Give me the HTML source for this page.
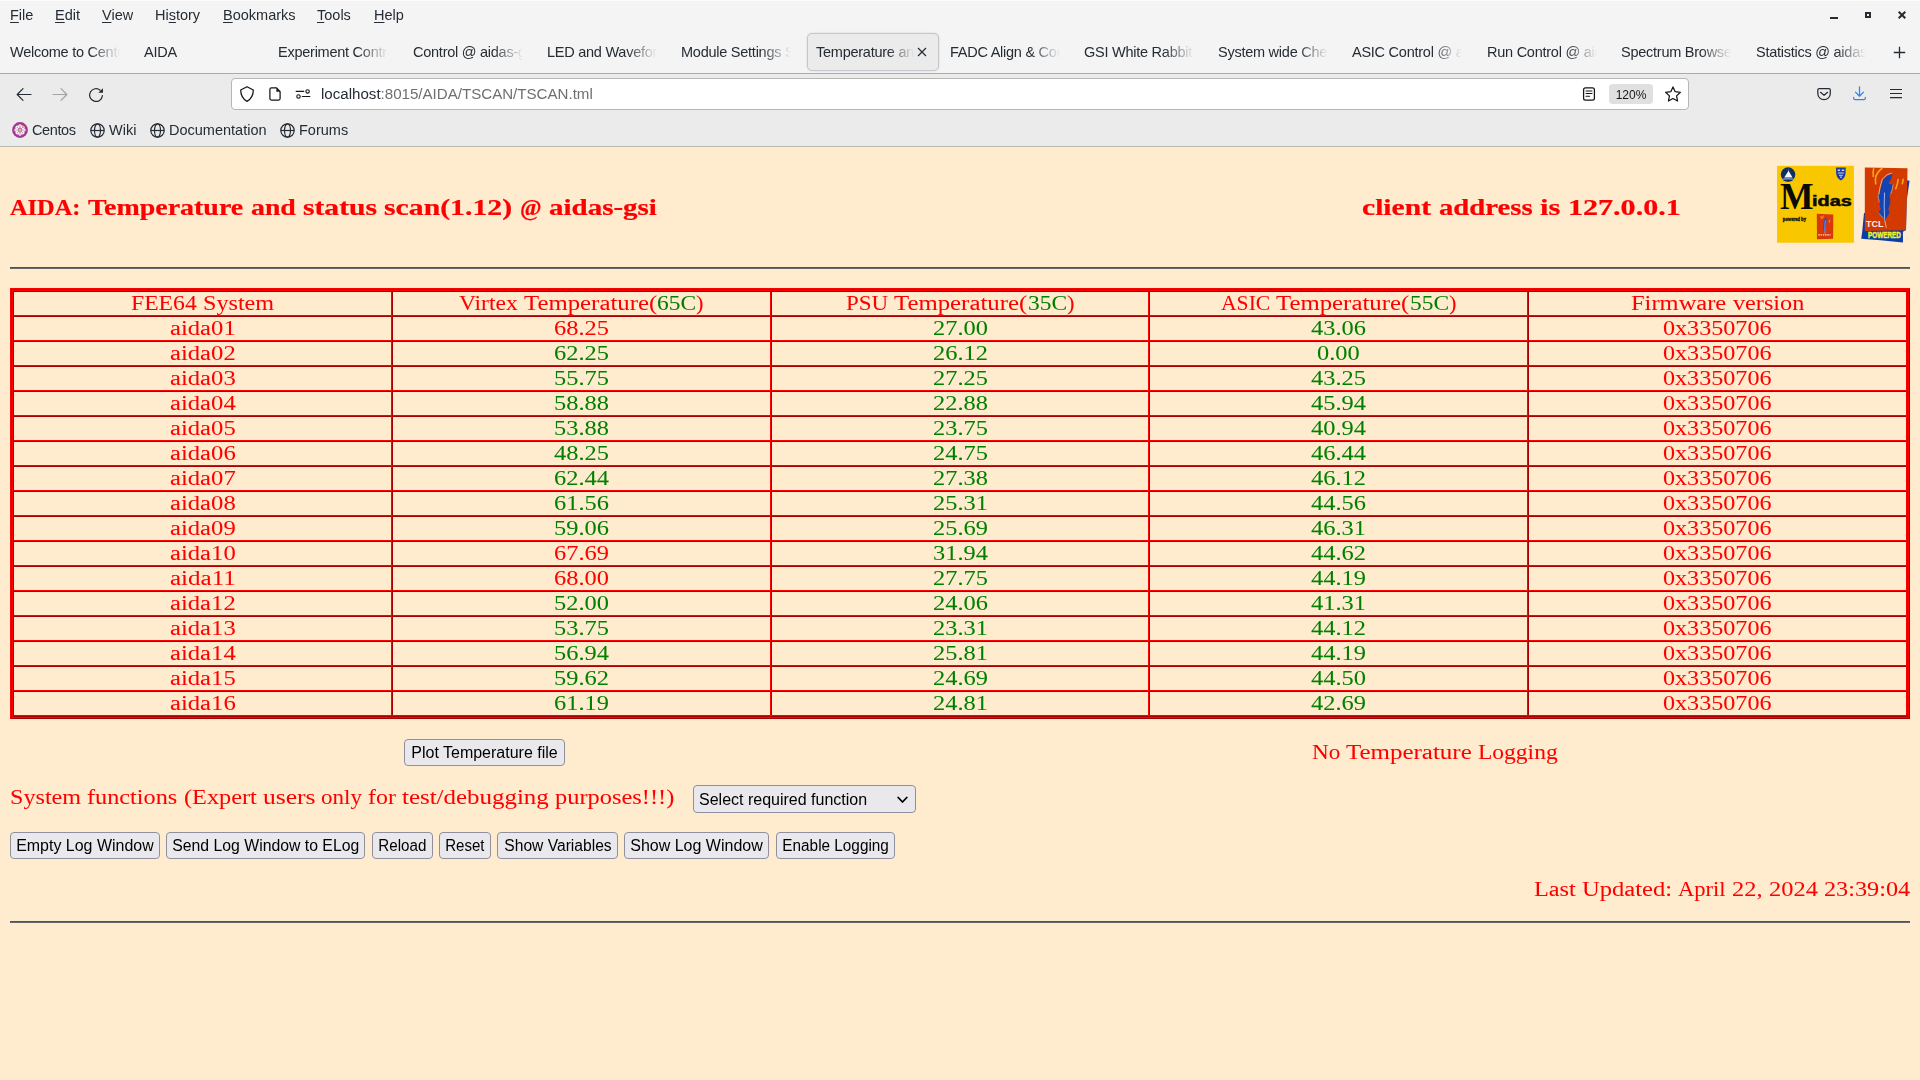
<!DOCTYPE html>
<html><head><meta charset="utf-8"><title>Temperature and status scan</title>
<style>
*{box-sizing:border-box;margin:0;padding:0}
html,body{width:1920px;height:1080px;overflow:hidden;background:#ffebcd;font-family:"Liberation Sans", sans-serif;}
#chrome{position:absolute;left:0;top:0;width:1920px;height:147px;background:#ebebeb;font-family:"Liberation Sans", sans-serif;color:#252c33;font-size:14.5px}
#chrome .top{position:absolute;left:0;top:0;width:1920px;height:73px;background:#f4f4f4}
#chrome .topline{position:absolute;left:0;top:0;width:1920px;height:1px;background:#fbfbfb}
#chrome .sep1{position:absolute;left:0;top:73px;width:1920px;height:1px;background:#ababab}
#chrome .sep2{position:absolute;left:0;top:146px;width:1920px;height:1px;background:#b9b9b5}
.mi{position:absolute;top:5px;height:20px;line-height:20px;white-space:pre}
.mi u{text-decoration:underline;text-underline-offset:1.5px;text-decoration-thickness:1px}
.tab{position:absolute;top:42px;height:20px;line-height:20px;width:113px;white-space:pre;overflow:hidden;letter-spacing:-0.25px;
  -webkit-mask-image:linear-gradient(to right,#000 0,#000 80px,transparent 110px);mask-image:linear-gradient(to right,#000 0,#000 80px,transparent 110px)}
.tab.full{-webkit-mask-image:none;mask-image:none}
#acttab{position:absolute;left:807px;top:33px;width:132px;height:38px;background:#ebebeb;border:1px solid #c6c6cc;border-radius:5px;box-shadow:0 0 2px rgba(0,0,0,.15)}
.tab.act{width:100px;-webkit-mask-image:linear-gradient(to right,#000 0,#000 72px,transparent 98px);mask-image:linear-gradient(to right,#000 0,#000 72px,transparent 98px)}
#urlbar{position:absolute;left:231px;top:78px;width:1458px;height:32px;background:#fff;border:1px solid #b6b6b2;border-radius:4px}
#url{position:absolute;left:321px;top:84px;height:20px;line-height:20px;font-size:15.1px;color:#6f6f6f;white-space:pre}
#url b{font-weight:400;color:#252c33}
#zoom{position:absolute;left:1609px;top:84px;width:44px;height:20px;background:#e0e0e0;border-radius:3px;text-align:center;line-height:22.5px;font-size:12px;color:#15141a}
.bm{position:absolute;top:120px;height:20px;line-height:20px;white-space:pre}
svg{position:absolute;overflow:visible}
#page{position:absolute;left:0;top:147px;width:1920px;height:933px;background:#ffebcd;overflow:hidden}
#page>*{position:absolute}
/* coordinates inside #page are absolute screen coords minus 147: we shift by using a wrapper */
#pg{position:absolute;left:0;top:-147px;width:1920px;height:1080px}
#pg>*{position:absolute}
.hr{left:10px;width:1900px;height:2px;background:#666;border-top:1px solid #4f5155;border-bottom:1px solid #66686e}
.ser{font-family:"Liberation Serif", serif;white-space:pre;color:#ff0000}
.tb{left:10px;top:288px;width:1900px;height:431px;
 box-shadow:inset 1px 1px 0 0 #ff0000, inset -1px -1px 0 0 #aa0000, inset 2px 2px 0 0 #aa0000, inset -2px -2px 0 0 #ff0000, inset 3px 3px 0 0 #ff0000, inset -3px -3px 0 0 #aa0000, inset 4px 4px 0 0 #aa0000, inset -4px -4px 0 0 #ff0000}
.hl{left:14px;width:1892px;height:2px;border-top:1px solid #ff0000;border-bottom:1px solid #aa0000}
.vl{top:292px;width:2px;height:423px;border-left:1px solid #ff0000;border-right:1px solid #aa0000}
.c{height:23px;text-align:center;font-family:"Liberation Serif", serif;white-space:pre;overflow:visible}
.c.r{color:#ff0000}.c.g{color:#008000}
.c i{font-style:normal;color:#008000}
.btn{height:27px;background:#e9e9ed;border:1px solid #8f8f9d;border-radius:4px;font-family:"Liberation Sans", sans-serif;font-size:16px;color:#000;text-align:center;line-height:26px;white-space:pre}
.sel{background:#e9e9ed;border:1px solid #8f8f9d;border-radius:4px;font-family:"Liberation Sans", sans-serif;font-size:16px;color:#000;line-height:27px;white-space:pre;padding-left:5px}
.sel svg{position:absolute}
.ser i{font-style:normal}

.btn span,.sel span{display:inline-block;transform-origin:50% 50%}
.mi,.bm,#url,#zoom,.btn span,.sel span,.tab.full{-webkit-mask-image:linear-gradient(#000,#000);mask-image:linear-gradient(#000,#000)}
.ser{-webkit-text-stroke:0.04px currentColor}
.ser.ttl,.ser.cli{-webkit-text-stroke:0.29px currentColor}

</style></head>
<body>
<div id="chrome">
<div class="top"></div><div class="topline"></div>
<div class="sep1"></div>
<!-- menu bar -->
<div class="mi" style="left:10px"><u>F</u>ile</div>
<div class="mi" style="left:55px"><u>E</u>dit</div>
<div class="mi" style="left:102px"><u>V</u>iew</div>
<div class="mi" style="left:155px">Hi<u>s</u>tory</div>
<div class="mi" style="left:223px"><u>B</u>ookmarks</div>
<div class="mi" style="left:317px"><u>T</u>ools</div>
<div class="mi" style="left:374px"><u>H</u>elp</div>
<!-- window controls -->
<svg style="left:1824px;top:6px" width="90" height="20" viewBox="1824 6 90 20">
<rect x="1830" y="17" width="8" height="2" fill="#252c33"/>
<rect x="1866" y="13" width="4" height="4" fill="none" stroke="#252c33" stroke-width="2"/>
<path d="M1898.7 11.7 L1905.3 18.3 M1905.3 11.7 L1898.7 18.3" stroke="#252c33" stroke-width="2" fill="none"/>
</svg>
<!-- tabs -->
<div id="acttab"></div>
<div class="tab" style="left:10px">Welcome to CentOS</div>
<div class="tab full" style="left:144px">AIDA</div>
<div class="tab" style="left:278px">Experiment Control</div>
<div class="tab" style="left:413px">Control @ aidas-gsi</div>
<div class="tab" style="left:547px">LED and Waveform</div>
<div class="tab" style="left:681px">Module Settings Se</div>
<div class="tab act" style="left:816px">Temperature and</div>
<div class="tab" style="left:950px">FADC Align &amp; Control</div>
<div class="tab" style="left:1084px">GSI White Rabbit</div>
<div class="tab" style="left:1218px">System wide Checks</div>
<div class="tab" style="left:1352px">ASIC Control @ aidas</div>
<div class="tab" style="left:1487px">Run Control @ aidas</div>
<div class="tab" style="left:1621px">Spectrum Browser</div>
<div class="tab" style="left:1756px">Statistics @ aidas-gsi</div>
<svg style="left:917px;top:47px" width="10" height="10" viewBox="0 0 10 10"><path d="M1 1 L9 9 M9 1 L1 9" stroke="#252c33" stroke-width="1.2" fill="none"/></svg>
<svg style="left:1893px;top:46px" width="13" height="13" viewBox="0 0 13 13"><path d="M6.5 0.8 V12.2 M0.8 6.5 H12.2" stroke="#252c33" stroke-width="1.3" fill="none"/></svg>
<!-- nav bar -->
<svg style="left:16px;top:87px" width="16" height="16" viewBox="0 0 16 16"><path d="M15 7.5 H1.4 M7 1.7 L1.2 7.5 L7 13.3" stroke="#252c33" stroke-width="1.2" fill="none" stroke-linecap="round" stroke-linejoin="round"/></svg>
<svg style="left:52px;top:87px" width="16" height="16" viewBox="0 0 16 16"><path d="M1 7.5 H14.6 M9 1.7 L14.8 7.5 L9 13.3" stroke="#a2a2a4" stroke-width="1.2" fill="none" stroke-linecap="round" stroke-linejoin="round"/></svg>
<svg style="left:88px;top:87px" width="16" height="16" viewBox="0 0 16 16"><path d="M14.4 8.7 A6.4 6.4 0 1 1 12.2 3.2" stroke="#252c33" stroke-width="1.25" fill="none" stroke-linecap="round"/><path d="M15 1.2 V5.8 H10.3 Z" fill="#252c33"/></svg>
<div id="urlbar"></div>
<svg style="left:239px;top:86px" width="16" height="16" viewBox="0 0 16 16"><path d="M8 0.7 L14.3 4 C14.3 9 12.2 13 8 15.4 C3.8 13 1.7 9 1.7 4 Z" stroke="#15141a" stroke-width="1.25" fill="none" stroke-linejoin="round"/></svg>
<svg style="left:267px;top:86px" width="16" height="16" viewBox="0 0 16 16"><path d="M2.9 3.4 Q2.9 1.9 4.4 1.9 H9.6 L13.1 5.6 V12.5 Q13.1 14 11.6 14 H4.4 Q2.9 14 2.9 12.5 Z" stroke="#15141a" stroke-width="1.25" fill="none" stroke-linejoin="round"/><path d="M9.4 1.9 L13.1 5.8 H9.4 Z" fill="#15141a"/></svg>
<svg style="left:295px;top:88px" width="16" height="12" viewBox="0 0 16 12"><path d="M1.2 3.4 H8.7 M7.3 8.5 H14.8" stroke="#15141a" stroke-width="1.2" fill="none" stroke-linecap="round"/><circle cx="12.6" cy="3.4" r="1.7" stroke="#15141a" stroke-width="1.1" fill="none"/><circle cx="3.5" cy="8.5" r="1.7" stroke="#15141a" stroke-width="1.1" fill="none"/></svg>
<div id="url"><b>localhost</b>:8015/AIDA/TSCAN/TSCAN.tml</div>
<svg style="left:1582px;top:87px" width="14" height="14" viewBox="0 0 14 14"><rect x="1.6" y="0.8" width="10.8" height="12.4" rx="1.9" stroke="#15141a" stroke-width="1.25" fill="none"/><path d="M4 3.9 H10 M4 6.5 H10 M4 9.3 H7.6" stroke="#15141a" stroke-width="1.05" fill="none" stroke-linecap="round"/></svg>
<div id="zoom">120%</div>
<svg style="left:1665px;top:86px" width="16" height="16" viewBox="0 0 16 16"><path d="M8.00 0.90 L10.20 5.67 L15.42 6.29 L11.57 9.86 L12.58 15.01 L8.00 12.45 L3.42 15.01 L4.43 9.86 L0.58 6.29 L5.80 5.67 Z" stroke="#15141a" stroke-width="1.25" fill="none" stroke-linejoin="round"/></svg>
<svg style="left:1816px;top:88px" width="16" height="14" viewBox="0 0 16 14"><path d="M3.2 0.7 H12.9 Q14.3 0.7 14.3 2.1 V5.4 A6.25 6.25 0 0 1 1.8 5.4 V2.1 Q1.8 0.7 3.2 0.7 Z" stroke="#252c33" stroke-width="1.25" fill="none"/><path d="M4.5 4.3 L8.05 7.3 L11.6 4.3" stroke="#252c33" stroke-width="1.25" fill="none" stroke-linecap="round" stroke-linejoin="round"/></svg>
<svg style="left:1852px;top:86px" width="15" height="16" viewBox="0 0 15 16"><path d="M7.5 0.8 V10 M3.5 6.1 L7.5 10.2 L11.5 6.1" stroke="#3584e4" stroke-width="1.25" fill="none" stroke-linecap="round" stroke-linejoin="round"/><path d="M1.7 11.4 V12.2 Q1.7 13.7 3.2 13.7 H11.8 Q13.3 13.7 13.3 12.2 V11.4" stroke="#3584e4" stroke-width="1.25" fill="none" stroke-linecap="round"/></svg>
<svg style="left:1890px;top:88px" width="12" height="12" viewBox="0 0 12 12"><path d="M0 1.5 H12 M0 5.5 H12 M0 9.6 H12" stroke="#252c33" stroke-width="1.2" fill="none"/></svg>
<!-- bookmarks -->
<svg style="left:12px;top:122px" width="16" height="16" viewBox="0 0 16 16"><circle cx="8" cy="8" r="7.9" fill="#a0398f"/><circle cx="11.90" cy="8.00" r="1.75" fill="#fff"/><circle cx="11.90" cy="8.00" r="0.6" fill="#9c3a8c"/><circle cx="10.76" cy="10.76" r="1.75" fill="#fff"/><circle cx="10.76" cy="10.76" r="0.6" fill="#9c3a8c"/><circle cx="8.00" cy="11.90" r="1.75" fill="#fff"/><circle cx="8.00" cy="11.90" r="0.6" fill="#9c3a8c"/><circle cx="5.24" cy="10.76" r="1.75" fill="#fff"/><circle cx="5.24" cy="10.76" r="0.6" fill="#9c3a8c"/><circle cx="4.10" cy="8.00" r="1.75" fill="#fff"/><circle cx="4.10" cy="8.00" r="0.6" fill="#9c3a8c"/><circle cx="5.24" cy="5.24" r="1.75" fill="#fff"/><circle cx="5.24" cy="5.24" r="0.6" fill="#9c3a8c"/><circle cx="8.00" cy="4.10" r="1.75" fill="#fff"/><circle cx="8.00" cy="4.10" r="0.6" fill="#9c3a8c"/><circle cx="10.76" cy="5.24" r="1.75" fill="#fff"/><circle cx="10.76" cy="5.24" r="0.6" fill="#9c3a8c"/><circle cx="8" cy="8" r="1.5" fill="#fff"/><circle cx="8" cy="8" r="1.0" fill="#f0a020"/><circle cx="11.2" cy="4.8" r="0.9" fill="#f0a020"/></svg>
<div class="bm" style="left:32px;letter-spacing:-0.4px">Centos</div>
<svg class="gl" style="left:90px;top:123px" width="15" height="15" viewBox="0 0 15 15"><g fill="none" stroke="#252c33" stroke-width="1.2"><circle cx="7.5" cy="7.5" r="6.7"/><ellipse cx="7.5" cy="7.5" rx="3" ry="6.7"/><path d="M0.8 7.5 H14.2"/></g></svg>
<div class="bm" style="left:109px">Wiki</div>
<svg class="gl" style="left:150px;top:123px" width="15" height="15" viewBox="0 0 15 15"><g fill="none" stroke="#252c33" stroke-width="1.2"><circle cx="7.5" cy="7.5" r="6.7"/><ellipse cx="7.5" cy="7.5" rx="3" ry="6.7"/><path d="M0.8 7.5 H14.2"/></g></svg>
<div class="bm" style="left:169px">Documentation</div>
<svg class="gl" style="left:280px;top:123px" width="15" height="15" viewBox="0 0 15 15"><g fill="none" stroke="#252c33" stroke-width="1.2"><circle cx="7.5" cy="7.5" r="6.7"/><ellipse cx="7.5" cy="7.5" rx="3" ry="6.7"/><path d="M0.8 7.5 H14.2"/></g></svg>
<div class="bm" style="left:299px">Forums</div>
<div class="sep2"></div>
</div>

<div id="page"><div id="pg">
<div class="ser ttl" style="left:10.00px;top:190px;font-size:28.3px;line-height:31px;height:31px;color:#ff0000;transform:scale(0.8603,0.8495);transform-origin:0 25px;font-weight:700;">AIDA:</div>
<div class="ser ttl" style="left:87.85px;top:190px;font-size:28.3px;line-height:31px;height:31px;color:#ff0000;transform:scale(0.9874,0.8495);transform-origin:0 25px;font-weight:700;">Temperature</div>
<div class="ser ttl" style="left:250.58px;top:190px;font-size:28.3px;line-height:31px;height:31px;color:#ff0000;transform:scale(0.9819,0.8495);transform-origin:0 25px;font-weight:700;">and</div>
<div class="ser ttl" style="left:302.91px;top:190px;font-size:28.3px;line-height:31px;height:31px;color:#ff0000;transform:scale(1.0454,0.8495);transform-origin:0 25px;font-weight:700;">status</div>
<div class="ser ttl" style="left:384.40px;top:190px;font-size:28.3px;line-height:31px;height:31px;color:#ff0000;transform:scale(1.0511,0.8495);transform-origin:0 25px;font-weight:700;">scan(1.12)</div>
<div class="ser ttl" style="left:519.98px;top:190px;font-size:28.3px;line-height:31px;height:31px;color:#ff0000;transform:scale(0.8205,0.8495);transform-origin:0 25px;font-weight:700;">@</div>
<div class="ser ttl" style="left:549.11px;top:190px;font-size:28.3px;line-height:31px;height:31px;color:#ff0000;transform:scale(1.024,0.8495);transform-origin:0 25px;font-weight:700;">aidas-gsi</div>
<div class="ser cli" style="left:1362.00px;top:190px;font-size:28.3px;line-height:31px;height:31px;color:#ff0000;transform:scale(1.0451,0.8495);transform-origin:0 25px;font-weight:700;">client</div>
<div class="ser cli" style="left:1438.51px;top:190px;font-size:28.3px;line-height:31px;height:31px;color:#ff0000;transform:scale(1.0149,0.8495);transform-origin:0 25px;font-weight:700;">address</div>
<div class="ser cli" style="left:1539.67px;top:190px;font-size:28.3px;line-height:31px;height:31px;color:#ff0000;transform:scale(1.0789,0.8495);transform-origin:0 25px;font-weight:700;">is</div>
<div class="ser cli" style="left:1567.56px;top:190px;font-size:28.3px;line-height:31px;height:31px;color:#ff0000;transform:scale(1.0623,0.8495);transform-origin:0 25px;font-weight:700;">127.0.0.1</div>
<svg style="left:1772px;top:160px" width="88" height="88" viewBox="0 0 1080 1080">
<rect x="62" y="72" width="943" height="943" fill="#f8c700"/>
<circle cx="197" cy="178" r="89" fill="#0e2f66"/>
<ellipse cx="197" cy="236" rx="70" ry="16" fill="#9fb6d6" opacity=".75"/>
<ellipse cx="197" cy="250" rx="58" ry="12" fill="#0e2f66"/>
<path d="M203 132 L252 214 L150 214 Z" fill="#f4f8fc"/>
<path d="M203 105 L209 135 L197 135 Z" fill="#8fa8cc" opacity=".7"/>
<path d="M785 92 H905 L902 170 Q895 225 845 252 Q795 225 788 170 Z" fill="#1c3aa6"/>
<path d="M806 118 h30 v18 h-30 z M856 118 h30 v18 h-30 z M810 152 h72 v14 h-72 z M822 180 h48 v12 h-48 z M836 204 h22 v14 h-22 z" fill="#e8ecf8" opacity=".85"/>
<text x="98" y="600" font-family="'Liberation Serif',serif" font-weight="700" font-size="466" fill="#0a0a06" textLength="412" lengthAdjust="spacingAndGlyphs">M</text>
<text x="492" y="561" font-family="'Liberation Sans',sans-serif" font-weight="700" font-size="178" fill="#0a0a06" textLength="486" lengthAdjust="spacingAndGlyphs" stroke="#0a0a06" stroke-width="6">idas</text>
<text x="133" y="754" font-family="'Liberation Serif',serif" font-weight="700" font-size="62" fill="#1a1600" textLength="285" lengthAdjust="spacingAndGlyphs" stroke="#1a1600" stroke-width="4">powered by</text>
<path d="M550 660 L752 668 L750 968 L552 972 Z" fill="#d8380c"/>
<path d="M668 706 Q636 720 630 790 Q626 850 640 890 Q662 860 664 800 Q672 750 668 706 Z" fill="#1c50c0"/>
<path d="M655 740 Q646 800 650 905" stroke="#e8ecf8" stroke-width="7" fill="none" opacity=".8"/>
<path d="M598 686 Q608 700 606 722 M630 682 Q622 700 624 716 M712 735 Q704 750 702 768" stroke="#f0a818" stroke-width="12" fill="none"/>
<path d="M568 920 h150" stroke="#f0d0b0" stroke-width="22" stroke-dasharray="18 10" fill="none" opacity=".85"/>
</svg>
<svg style="left:1856px;top:160px" width="60" height="88" viewBox="0 0 736 1080">
<path d="M632 248 L657 256 L622 500 L614 860 L576 880 L576 1014 L300 986 L64 968 L76 880 L98 650 L300 640 Z" fill="#0c3ca8"/>
<path d="M108 92 L632 100 L626 400 L612 862 L108 870 Z" fill="#d23a00"/>
<path d="M446 172 Q392 176 334 240 Q300 330 288 428 L268 428 Q276 480 288 520 Q292 570 302 600 L276 650 Q316 690 352 748 Q384 700 412 642 L396 600 Q424 548 422 482 L410 440 Q440 384 452 300 L398 290 Q440 236 446 172 Z" fill="#1444b4"/>
<path d="M440 160 Q380 165 322 235 Q292 330 278 425" stroke="#f0f0f8" stroke-width="9" fill="none" opacity=".85"/>
<path d="M350 400 Q340 560 352 740 L372 832" stroke="#e8e8f4" stroke-width="9" fill="none" opacity=".9"/>
<path d="M456 300 Q452 350 426 420 M270 430 Q276 480 286 520 M278 652 Q310 680 340 720" stroke="#f0f0f8" stroke-width="8" fill="none" opacity=".7"/>
<path d="M216 108 Q206 150 212 200 M318 104 Q256 150 240 214 Q236 250 242 292 M516 240 Q512 300 488 352 M578 238 Q576 262 568 290" stroke="#f8a414" stroke-width="20" fill="none" stroke-linecap="round"/>
<text x="122" y="826" font-family="'Liberation Sans',sans-serif" font-weight="700" font-size="102" fill="#f8f0ec" textLength="214" lengthAdjust="spacingAndGlyphs">TCL</text>
<text x="148" y="958" font-family="'Liberation Sans',sans-serif" font-weight="700" font-size="104" fill="#f0f028" textLength="402" lengthAdjust="spacingAndGlyphs" stroke="#f0f028" stroke-width="6">POWERED</text>
</svg>

<div class="hr" style="top:267px"></div>
<div class="tb"></div>
<div class="hl" style="top:315px"></div>
<div class="hl" style="top:340px"></div>
<div class="hl" style="top:365px"></div>
<div class="hl" style="top:390px"></div>
<div class="hl" style="top:415px"></div>
<div class="hl" style="top:440px"></div>
<div class="hl" style="top:465px"></div>
<div class="hl" style="top:490px"></div>
<div class="hl" style="top:515px"></div>
<div class="hl" style="top:540px"></div>
<div class="hl" style="top:565px"></div>
<div class="hl" style="top:590px"></div>
<div class="hl" style="top:615px"></div>
<div class="hl" style="top:640px"></div>
<div class="hl" style="top:665px"></div>
<div class="hl" style="top:690px"></div>
<div class="vl" style="left:391px"></div>
<div class="vl" style="left:770px"></div>
<div class="vl" style="left:1148px"></div>
<div class="vl" style="left:1527px"></div>
<div class="ser h0" style="left:130.99px;top:288px;font-size:24.31px;line-height:27px;height:27px;color:#ff0000;transform:scale(0.9741,0.879);transform-origin:0 22px;">FEE64</div>
<div class="ser h0" style="left:202.88px;top:288px;font-size:24.31px;line-height:27px;height:27px;color:#ff0000;transform:scale(0.9937,0.879);transform-origin:0 22px;">System</div>
<div class="ser h1" style="left:459.13px;top:288px;font-size:24.31px;line-height:27px;height:27px;color:#ff0000;transform:scale(0.9688,0.879);transform-origin:0 22px;">Virtex</div>
<div class="ser h1" style="left:523.98px;top:288px;font-size:24.31px;line-height:27px;height:27px;color:#ff0000;transform:scale(1.0207,0.879);transform-origin:0 22px;">Temperature(</div>
<div class="ser h1" style="left:657.26px;top:288px;font-size:24.31px;line-height:27px;height:27px;color:#008000;transform:scale(0.9654,0.879);transform-origin:0 22px;">65C</div>
<div class="ser h1" style="left:696.38px;top:288px;font-size:24.31px;line-height:27px;height:27px;color:#ff0000;transform:scale(0.9252,0.879);transform-origin:0 22px;">)</div>
<div class="ser h2" style="left:845.88px;top:288px;font-size:24.31px;line-height:27px;height:27px;color:#ff0000;transform:scale(0.9474,0.879);transform-origin:0 22px;">PSU</div>
<div class="ser h2" style="left:894.23px;top:288px;font-size:24.31px;line-height:27px;height:27px;color:#ff0000;transform:scale(1.0207,0.879);transform-origin:0 22px;">Temperature(</div>
<div class="ser h2" style="left:1027.51px;top:288px;font-size:24.31px;line-height:27px;height:27px;color:#008000;transform:scale(0.9654,0.879);transform-origin:0 22px;">35C</div>
<div class="ser h2" style="left:1066.63px;top:288px;font-size:24.31px;line-height:27px;height:27px;color:#ff0000;transform:scale(0.9252,0.879);transform-origin:0 22px;">)</div>
<div class="ser h3" style="left:1220.86px;top:288px;font-size:24.31px;line-height:27px;height:27px;color:#ff0000;transform:scale(0.89,0.879);transform-origin:0 22px;">ASIC</div>
<div class="ser h3" style="left:1276.25px;top:288px;font-size:24.31px;line-height:27px;height:27px;color:#ff0000;transform:scale(1.0207,0.879);transform-origin:0 22px;">Temperature(</div>
<div class="ser h3" style="left:1409.53px;top:288px;font-size:24.31px;line-height:27px;height:27px;color:#008000;transform:scale(0.9654,0.879);transform-origin:0 22px;">55C</div>
<div class="ser h3" style="left:1448.65px;top:288px;font-size:24.31px;line-height:27px;height:27px;color:#ff0000;transform:scale(0.9252,0.879);transform-origin:0 22px;">)</div>
<div class="ser h4" style="left:1631.16px;top:288px;font-size:24.31px;line-height:27px;height:27px;color:#ff0000;transform:scale(1.008,0.879);transform-origin:0 22px;">Firmware</div>
<div class="ser h4" style="left:1732.53px;top:288px;font-size:24.31px;line-height:27px;height:27px;color:#ff0000;transform:scale(0.9964,0.879);transform-origin:0 22px;">version</div>
<div class="ser nm" style="left:169.62px;top:313px;font-size:24.31px;line-height:27px;height:27px;color:#ff0000;transform:scale(1.0148,0.879);transform-origin:0 22px;">aida01</div>
<div class="ser nu" style="left:554.02px;top:313px;font-size:24.31px;line-height:27px;height:27px;color:#ff0000;transform:scale(1.0049,0.879);transform-origin:0 22px;">68.25</div>
<div class="ser nu" style="left:932.52px;top:313px;font-size:24.31px;line-height:27px;height:27px;color:#008000;transform:scale(1.0049,0.879);transform-origin:0 22px;">27.00</div>
<div class="ser nu" style="left:1311.02px;top:313px;font-size:24.31px;line-height:27px;height:27px;color:#008000;transform:scale(1.0049,0.879);transform-origin:0 22px;">43.06</div>
<div class="ser fw" style="left:1663.22px;top:313px;font-size:24.31px;line-height:27px;height:27px;color:#ff0000;transform:scale(0.9923,0.879);transform-origin:0 22px;">0x3350706</div>
<div class="ser nm" style="left:169.62px;top:338px;font-size:24.31px;line-height:27px;height:27px;color:#ff0000;transform:scale(1.0148,0.879);transform-origin:0 22px;">aida02</div>
<div class="ser nu" style="left:554.02px;top:338px;font-size:24.31px;line-height:27px;height:27px;color:#008000;transform:scale(1.0049,0.879);transform-origin:0 22px;">62.25</div>
<div class="ser nu" style="left:932.52px;top:338px;font-size:24.31px;line-height:27px;height:27px;color:#008000;transform:scale(1.0049,0.879);transform-origin:0 22px;">26.12</div>
<div class="ser nu" style="left:1317.12px;top:338px;font-size:24.31px;line-height:27px;height:27px;color:#008000;transform:scale(1.0049,0.879);transform-origin:0 22px;">0.00</div>
<div class="ser fw" style="left:1663.22px;top:338px;font-size:24.31px;line-height:27px;height:27px;color:#ff0000;transform:scale(0.9923,0.879);transform-origin:0 22px;">0x3350706</div>
<div class="ser nm" style="left:169.62px;top:363px;font-size:24.31px;line-height:27px;height:27px;color:#ff0000;transform:scale(1.0148,0.879);transform-origin:0 22px;">aida03</div>
<div class="ser nu" style="left:554.02px;top:363px;font-size:24.31px;line-height:27px;height:27px;color:#008000;transform:scale(1.0049,0.879);transform-origin:0 22px;">55.75</div>
<div class="ser nu" style="left:932.52px;top:363px;font-size:24.31px;line-height:27px;height:27px;color:#008000;transform:scale(1.0049,0.879);transform-origin:0 22px;">27.25</div>
<div class="ser nu" style="left:1311.02px;top:363px;font-size:24.31px;line-height:27px;height:27px;color:#008000;transform:scale(1.0049,0.879);transform-origin:0 22px;">43.25</div>
<div class="ser fw" style="left:1663.22px;top:363px;font-size:24.31px;line-height:27px;height:27px;color:#ff0000;transform:scale(0.9923,0.879);transform-origin:0 22px;">0x3350706</div>
<div class="ser nm" style="left:169.62px;top:388px;font-size:24.31px;line-height:27px;height:27px;color:#ff0000;transform:scale(1.0148,0.879);transform-origin:0 22px;">aida04</div>
<div class="ser nu" style="left:554.02px;top:388px;font-size:24.31px;line-height:27px;height:27px;color:#008000;transform:scale(1.0049,0.879);transform-origin:0 22px;">58.88</div>
<div class="ser nu" style="left:932.52px;top:388px;font-size:24.31px;line-height:27px;height:27px;color:#008000;transform:scale(1.0049,0.879);transform-origin:0 22px;">22.88</div>
<div class="ser nu" style="left:1311.02px;top:388px;font-size:24.31px;line-height:27px;height:27px;color:#008000;transform:scale(1.0049,0.879);transform-origin:0 22px;">45.94</div>
<div class="ser fw" style="left:1663.22px;top:388px;font-size:24.31px;line-height:27px;height:27px;color:#ff0000;transform:scale(0.9923,0.879);transform-origin:0 22px;">0x3350706</div>
<div class="ser nm" style="left:169.62px;top:413px;font-size:24.31px;line-height:27px;height:27px;color:#ff0000;transform:scale(1.0148,0.879);transform-origin:0 22px;">aida05</div>
<div class="ser nu" style="left:554.02px;top:413px;font-size:24.31px;line-height:27px;height:27px;color:#008000;transform:scale(1.0049,0.879);transform-origin:0 22px;">53.88</div>
<div class="ser nu" style="left:932.52px;top:413px;font-size:24.31px;line-height:27px;height:27px;color:#008000;transform:scale(1.0049,0.879);transform-origin:0 22px;">23.75</div>
<div class="ser nu" style="left:1311.02px;top:413px;font-size:24.31px;line-height:27px;height:27px;color:#008000;transform:scale(1.0049,0.879);transform-origin:0 22px;">40.94</div>
<div class="ser fw" style="left:1663.22px;top:413px;font-size:24.31px;line-height:27px;height:27px;color:#ff0000;transform:scale(0.9923,0.879);transform-origin:0 22px;">0x3350706</div>
<div class="ser nm" style="left:169.62px;top:438px;font-size:24.31px;line-height:27px;height:27px;color:#ff0000;transform:scale(1.0148,0.879);transform-origin:0 22px;">aida06</div>
<div class="ser nu" style="left:554.02px;top:438px;font-size:24.31px;line-height:27px;height:27px;color:#008000;transform:scale(1.0049,0.879);transform-origin:0 22px;">48.25</div>
<div class="ser nu" style="left:932.52px;top:438px;font-size:24.31px;line-height:27px;height:27px;color:#008000;transform:scale(1.0049,0.879);transform-origin:0 22px;">24.75</div>
<div class="ser nu" style="left:1311.02px;top:438px;font-size:24.31px;line-height:27px;height:27px;color:#008000;transform:scale(1.0049,0.879);transform-origin:0 22px;">46.44</div>
<div class="ser fw" style="left:1663.22px;top:438px;font-size:24.31px;line-height:27px;height:27px;color:#ff0000;transform:scale(0.9923,0.879);transform-origin:0 22px;">0x3350706</div>
<div class="ser nm" style="left:169.62px;top:463px;font-size:24.31px;line-height:27px;height:27px;color:#ff0000;transform:scale(1.0148,0.879);transform-origin:0 22px;">aida07</div>
<div class="ser nu" style="left:554.02px;top:463px;font-size:24.31px;line-height:27px;height:27px;color:#008000;transform:scale(1.0049,0.879);transform-origin:0 22px;">62.44</div>
<div class="ser nu" style="left:932.52px;top:463px;font-size:24.31px;line-height:27px;height:27px;color:#008000;transform:scale(1.0049,0.879);transform-origin:0 22px;">27.38</div>
<div class="ser nu" style="left:1311.02px;top:463px;font-size:24.31px;line-height:27px;height:27px;color:#008000;transform:scale(1.0049,0.879);transform-origin:0 22px;">46.12</div>
<div class="ser fw" style="left:1663.22px;top:463px;font-size:24.31px;line-height:27px;height:27px;color:#ff0000;transform:scale(0.9923,0.879);transform-origin:0 22px;">0x3350706</div>
<div class="ser nm" style="left:169.62px;top:488px;font-size:24.31px;line-height:27px;height:27px;color:#ff0000;transform:scale(1.0148,0.879);transform-origin:0 22px;">aida08</div>
<div class="ser nu" style="left:554.02px;top:488px;font-size:24.31px;line-height:27px;height:27px;color:#008000;transform:scale(1.0049,0.879);transform-origin:0 22px;">61.56</div>
<div class="ser nu" style="left:932.52px;top:488px;font-size:24.31px;line-height:27px;height:27px;color:#008000;transform:scale(1.0049,0.879);transform-origin:0 22px;">25.31</div>
<div class="ser nu" style="left:1311.02px;top:488px;font-size:24.31px;line-height:27px;height:27px;color:#008000;transform:scale(1.0049,0.879);transform-origin:0 22px;">44.56</div>
<div class="ser fw" style="left:1663.22px;top:488px;font-size:24.31px;line-height:27px;height:27px;color:#ff0000;transform:scale(0.9923,0.879);transform-origin:0 22px;">0x3350706</div>
<div class="ser nm" style="left:169.62px;top:513px;font-size:24.31px;line-height:27px;height:27px;color:#ff0000;transform:scale(1.0148,0.879);transform-origin:0 22px;">aida09</div>
<div class="ser nu" style="left:554.02px;top:513px;font-size:24.31px;line-height:27px;height:27px;color:#008000;transform:scale(1.0049,0.879);transform-origin:0 22px;">59.06</div>
<div class="ser nu" style="left:932.52px;top:513px;font-size:24.31px;line-height:27px;height:27px;color:#008000;transform:scale(1.0049,0.879);transform-origin:0 22px;">25.69</div>
<div class="ser nu" style="left:1311.02px;top:513px;font-size:24.31px;line-height:27px;height:27px;color:#008000;transform:scale(1.0049,0.879);transform-origin:0 22px;">46.31</div>
<div class="ser fw" style="left:1663.22px;top:513px;font-size:24.31px;line-height:27px;height:27px;color:#ff0000;transform:scale(0.9923,0.879);transform-origin:0 22px;">0x3350706</div>
<div class="ser nm" style="left:169.62px;top:538px;font-size:24.31px;line-height:27px;height:27px;color:#ff0000;transform:scale(1.0148,0.879);transform-origin:0 22px;">aida10</div>
<div class="ser nu" style="left:554.02px;top:538px;font-size:24.31px;line-height:27px;height:27px;color:#ff0000;transform:scale(1.0049,0.879);transform-origin:0 22px;">67.69</div>
<div class="ser nu" style="left:932.52px;top:538px;font-size:24.31px;line-height:27px;height:27px;color:#008000;transform:scale(1.0049,0.879);transform-origin:0 22px;">31.94</div>
<div class="ser nu" style="left:1311.02px;top:538px;font-size:24.31px;line-height:27px;height:27px;color:#008000;transform:scale(1.0049,0.879);transform-origin:0 22px;">44.62</div>
<div class="ser fw" style="left:1663.22px;top:538px;font-size:24.31px;line-height:27px;height:27px;color:#ff0000;transform:scale(0.9923,0.879);transform-origin:0 22px;">0x3350706</div>
<div class="ser nm" style="left:169.62px;top:563px;font-size:24.31px;line-height:27px;height:27px;color:#ff0000;transform:scale(1.0291,0.879);transform-origin:0 22px;">aida11</div>
<div class="ser nu" style="left:554.02px;top:563px;font-size:24.31px;line-height:27px;height:27px;color:#ff0000;transform:scale(1.0049,0.879);transform-origin:0 22px;">68.00</div>
<div class="ser nu" style="left:932.52px;top:563px;font-size:24.31px;line-height:27px;height:27px;color:#008000;transform:scale(1.0049,0.879);transform-origin:0 22px;">27.75</div>
<div class="ser nu" style="left:1311.02px;top:563px;font-size:24.31px;line-height:27px;height:27px;color:#008000;transform:scale(1.0049,0.879);transform-origin:0 22px;">44.19</div>
<div class="ser fw" style="left:1663.22px;top:563px;font-size:24.31px;line-height:27px;height:27px;color:#ff0000;transform:scale(0.9923,0.879);transform-origin:0 22px;">0x3350706</div>
<div class="ser nm" style="left:169.62px;top:588px;font-size:24.31px;line-height:27px;height:27px;color:#ff0000;transform:scale(1.0148,0.879);transform-origin:0 22px;">aida12</div>
<div class="ser nu" style="left:554.02px;top:588px;font-size:24.31px;line-height:27px;height:27px;color:#008000;transform:scale(1.0049,0.879);transform-origin:0 22px;">52.00</div>
<div class="ser nu" style="left:932.52px;top:588px;font-size:24.31px;line-height:27px;height:27px;color:#008000;transform:scale(1.0049,0.879);transform-origin:0 22px;">24.06</div>
<div class="ser nu" style="left:1311.02px;top:588px;font-size:24.31px;line-height:27px;height:27px;color:#008000;transform:scale(1.0049,0.879);transform-origin:0 22px;">41.31</div>
<div class="ser fw" style="left:1663.22px;top:588px;font-size:24.31px;line-height:27px;height:27px;color:#ff0000;transform:scale(0.9923,0.879);transform-origin:0 22px;">0x3350706</div>
<div class="ser nm" style="left:169.62px;top:613px;font-size:24.31px;line-height:27px;height:27px;color:#ff0000;transform:scale(1.0148,0.879);transform-origin:0 22px;">aida13</div>
<div class="ser nu" style="left:554.02px;top:613px;font-size:24.31px;line-height:27px;height:27px;color:#008000;transform:scale(1.0049,0.879);transform-origin:0 22px;">53.75</div>
<div class="ser nu" style="left:932.52px;top:613px;font-size:24.31px;line-height:27px;height:27px;color:#008000;transform:scale(1.0049,0.879);transform-origin:0 22px;">23.31</div>
<div class="ser nu" style="left:1311.02px;top:613px;font-size:24.31px;line-height:27px;height:27px;color:#008000;transform:scale(1.0049,0.879);transform-origin:0 22px;">44.12</div>
<div class="ser fw" style="left:1663.22px;top:613px;font-size:24.31px;line-height:27px;height:27px;color:#ff0000;transform:scale(0.9923,0.879);transform-origin:0 22px;">0x3350706</div>
<div class="ser nm" style="left:169.62px;top:638px;font-size:24.31px;line-height:27px;height:27px;color:#ff0000;transform:scale(1.0148,0.879);transform-origin:0 22px;">aida14</div>
<div class="ser nu" style="left:554.02px;top:638px;font-size:24.31px;line-height:27px;height:27px;color:#008000;transform:scale(1.0049,0.879);transform-origin:0 22px;">56.94</div>
<div class="ser nu" style="left:932.52px;top:638px;font-size:24.31px;line-height:27px;height:27px;color:#008000;transform:scale(1.0049,0.879);transform-origin:0 22px;">25.81</div>
<div class="ser nu" style="left:1311.02px;top:638px;font-size:24.31px;line-height:27px;height:27px;color:#008000;transform:scale(1.0049,0.879);transform-origin:0 22px;">44.19</div>
<div class="ser fw" style="left:1663.22px;top:638px;font-size:24.31px;line-height:27px;height:27px;color:#ff0000;transform:scale(0.9923,0.879);transform-origin:0 22px;">0x3350706</div>
<div class="ser nm" style="left:169.62px;top:663px;font-size:24.31px;line-height:27px;height:27px;color:#ff0000;transform:scale(1.0148,0.879);transform-origin:0 22px;">aida15</div>
<div class="ser nu" style="left:554.02px;top:663px;font-size:24.31px;line-height:27px;height:27px;color:#008000;transform:scale(1.0049,0.879);transform-origin:0 22px;">59.62</div>
<div class="ser nu" style="left:932.52px;top:663px;font-size:24.31px;line-height:27px;height:27px;color:#008000;transform:scale(1.0049,0.879);transform-origin:0 22px;">24.69</div>
<div class="ser nu" style="left:1311.02px;top:663px;font-size:24.31px;line-height:27px;height:27px;color:#008000;transform:scale(1.0049,0.879);transform-origin:0 22px;">44.50</div>
<div class="ser fw" style="left:1663.22px;top:663px;font-size:24.31px;line-height:27px;height:27px;color:#ff0000;transform:scale(0.9923,0.879);transform-origin:0 22px;">0x3350706</div>
<div class="ser nm" style="left:169.62px;top:688px;font-size:24.31px;line-height:27px;height:27px;color:#ff0000;transform:scale(1.0148,0.879);transform-origin:0 22px;">aida16</div>
<div class="ser nu" style="left:554.02px;top:688px;font-size:24.31px;line-height:27px;height:27px;color:#008000;transform:scale(1.0049,0.879);transform-origin:0 22px;">61.19</div>
<div class="ser nu" style="left:932.52px;top:688px;font-size:24.31px;line-height:27px;height:27px;color:#008000;transform:scale(1.0049,0.879);transform-origin:0 22px;">24.81</div>
<div class="ser nu" style="left:1311.02px;top:688px;font-size:24.31px;line-height:27px;height:27px;color:#008000;transform:scale(1.0049,0.879);transform-origin:0 22px;">42.69</div>
<div class="ser fw" style="left:1663.22px;top:688px;font-size:24.31px;line-height:27px;height:27px;color:#ff0000;transform:scale(0.9923,0.879);transform-origin:0 22px;">0x3350706</div>
<div class="btn" style="left:404px;top:739px;width:161px"><span>Plot Temperature file</span></div>
<div class="ser notl" style="left:1311.98px;top:737px;font-size:24.31px;line-height:27px;height:27px;color:#ff0000;transform:scale(0.9545,0.879);transform-origin:0 22px;">No</div>
<div class="ser notl" style="left:1346.44px;top:737px;font-size:24.31px;line-height:27px;height:27px;color:#ff0000;transform:scale(1.027,0.879);transform-origin:0 22px;">Temperature</div>
<div class="ser notl" style="left:1478.33px;top:737px;font-size:24.31px;line-height:27px;height:27px;color:#ff0000;transform:scale(0.9673,0.879);transform-origin:0 22px;">Logging</div>
<div class="ser sysf" style="left:10.00px;top:782px;font-size:24.31px;line-height:27px;height:27px;color:#ff0000;transform:scale(0.9937,0.879);transform-origin:0 22px;">System</div>
<div class="ser sysf" style="left:87.24px;top:782px;font-size:24.31px;line-height:27px;height:27px;color:#ff0000;transform:scale(0.9972,0.879);transform-origin:0 22px;">functions</div>
<div class="ser sysf" style="left:183.57px;top:782px;font-size:24.31px;line-height:27px;height:27px;color:#ff0000;transform:scale(0.9998,0.879);transform-origin:0 22px;">(Expert</div>
<div class="ser sysf" style="left:262.55px;top:782px;font-size:24.31px;line-height:27px;height:27px;color:#ff0000;transform:scale(1.053,0.879);transform-origin:0 22px;">users</div>
<div class="ser sysf" style="left:321.27px;top:782px;font-size:24.31px;line-height:27px;height:27px;color:#ff0000;transform:scale(0.9466,0.879);transform-origin:0 22px;">only</div>
<div class="ser sysf" style="left:368.28px;top:782px;font-size:24.31px;line-height:27px;height:27px;color:#ff0000;transform:scale(0.9823,0.879);transform-origin:0 22px;">for</div>
<div class="ser sysf" style="left:402.23px;top:782px;font-size:24.31px;line-height:27px;height:27px;color:#ff0000;transform:scale(1.0256,0.879);transform-origin:0 22px;">test/debugging</div>
<div class="ser sysf" style="left:555.14px;top:782px;font-size:24.31px;line-height:27px;height:27px;color:#ff0000;transform:scale(1.0049,0.879);transform-origin:0 22px;">purposes!!!)</div>
<div class="sel" style="left:693px;top:785px;width:223px;height:28px"><span>Select required function</span><svg style="right:7px;top:10px" width="11" height="8" viewBox="0 0 11 8"><path d="M1.2 1.5 L5.5 6 L9.8 1.5" fill="none" stroke="#000" stroke-width="1.8" stroke-linecap="round" stroke-linejoin="round"/></svg></div>
<div class="btn" style="left:10px;top:832px;width:150px"><span style="transform:scaleX(0.9975)">Empty Log Window</span></div>
<div class="btn" style="left:166px;top:832px;width:199px"><span style="transform:scaleX(0.987)">Send Log Window to ELog</span></div>
<div class="btn" style="left:372px;top:832px;width:61px"><span style="transform:scaleX(0.947)">Reload</span></div>
<div class="btn" style="left:439px;top:832px;width:52px"><span style="transform:scaleX(0.94)">Reset</span></div>
<div class="btn" style="left:497px;top:832px;width:121px"><span style="transform:scaleX(0.976)">Show Variables</span></div>
<div class="btn" style="left:624px;top:832px;width:145px"><span style="transform:scaleX(1.0)">Show Log Window</span></div>
<div class="btn" style="left:776px;top:832px;width:119px"><span style="transform:scaleX(0.958)">Enable Logging</span></div>
<div class="ser last" style="left:1534.43px;top:874px;font-size:24.31px;line-height:27px;height:27px;color:#ff0000;transform:scale(0.9979,0.879);transform-origin:0 22px;">Last</div>
<div class="ser last" style="left:1582.30px;top:874px;font-size:24.31px;line-height:27px;height:27px;color:#ff0000;transform:scale(1.0105,0.879);transform-origin:0 22px;">Updated:</div>
<div class="ser last" style="left:1678.45px;top:874px;font-size:24.31px;line-height:27px;height:27px;color:#ff0000;transform:scale(0.9279,0.879);transform-origin:0 22px;">April</div>
<div class="ser last" style="left:1732.17px;top:874px;font-size:24.31px;line-height:27px;height:27px;color:#ff0000;transform:scale(1.0049,0.879);transform-origin:0 22px;">22,</div>
<div class="ser last" style="left:1768.80px;top:874px;font-size:24.31px;line-height:27px;height:27px;color:#ff0000;transform:scale(1.005,0.879);transform-origin:0 22px;">2024</div>
<div class="ser last" style="left:1823.77px;top:874px;font-size:24.31px;line-height:27px;height:27px;color:#ff0000;transform:scale(0.9976,0.879);transform-origin:0 22px;">23:39:04</div>
<div class="hr" style="top:921px"></div>
</div></div>
</body></html>
